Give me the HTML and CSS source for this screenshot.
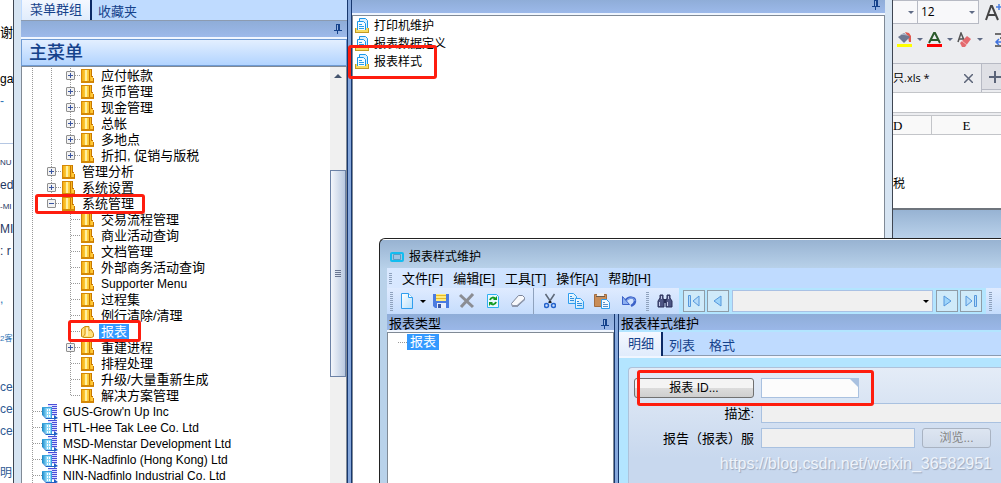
FILE: index.html
```
<!DOCTYPE html>
<html lang="zh-CN">
<head>
    <meta charset="utf-8">
    <title>报表样式维护</title>
    <link rel="stylesheet" href="styles.css">
</head>
<body>
<!-- shared icons -->
<svg class="defs" aria-hidden="true">
    <defs>
        <linearGradient id="gold" x1="0" x2="1" y1="0" y2="0">
            <stop offset="0" stop-color="#f2a408"/>
            <stop offset=".5" stop-color="#ffd84a"/>
            <stop offset="1" stop-color="#f8b010"/>
        </linearGradient>
        <linearGradient id="sky" x1="0" x2="1" y1="0" y2="1">
            <stop offset="0" stop-color="#ffffff"/>
            <stop offset="1" stop-color="#b4dffb"/>
        </linearGradient>
        <linearGradient id="tower" x1="0" x2="1" y1="0" y2="0">
            <stop offset="0" stop-color="#1585c8"/>
            <stop offset="1" stop-color="#7ccdf0"/>
        </linearGradient>
        <symbol id="folder" viewBox="0 0 13 14">
            <rect x="0" y="0" width="11" height="13" fill="url(#gold)"/>
            <path d="M4 1h2v11H4z" fill="#fff0a0"/>
            <path d="M0 0h11v1H0zM0 0h1v13H0zM0 12h13v2H0z" fill="#d48806"/>
            <path d="M8 1h1v11H8zM10 0h1v8h-1zM12 9h1v4h-1zM10 7h2v1h-2z" fill="#c87800"/>
            <path d="M10 8h2v4h-2z" fill="#ffc83a"/>
        </symbol>
        <symbol id="folder-open" viewBox="0 0 13 14">
            <path d="M4 1.500h4v4l2-1 2.500 4v3l-2 1H3l-2.500-1V4z" fill="#ffdf78" stroke="#c98a10"/>
            <path d="M4 2v7l-2 3" fill="none" stroke="#d99a1c"/>
            <path d="M5 3h2v8H5z" fill="#fff0b4"/>
        </symbol>
        <symbol id="company" viewBox="0 0 16 16">
            <path d="M6 0h9v12H6z" fill="#dcdcff"/>
            <path d="M6 0h9v1H6zM10 2h5v1h-5zM10 4h5v1h-5zM10 6h5v1h-5zM10 8h5v1h-5zM10 10h5v1h-5z" fill="#4a4fd8"/>
            <path d="M0 3h4v11l-4-3z" fill="url(#tower)"/>
            <path d="M4 3h6v12H4z" fill="#8dd8f8"/>
            <path d="M0 3h10v1H0zM9 3h1v11H9z" fill="#3aa4de"/>
            <path d="M5 5h1v2H5zM7 5h1v2H7zM5 8h1v2H5zM7 8h1v2H7zM5 11h1v2H5zM7 11h1v2H7z" fill="#fff"/>
            <path d="M0 11l4 3h8v-3l4 3-4 2v-1H4z" fill="#1f5fc4"/>
        </symbol>
        <symbol id="report" viewBox="0 0 14 16">
            <path d="M4.500.5h6l2 2v9h-8z" fill="#d9efff" stroke="#1b97e8"/>
            <path d="M2.500 3.500h6l2 2v8h-8z" fill="#f4fbff" stroke="#1b97e8"/>
            <path d="M4 6h3v1H4zM4 8h5v1H4zM4 10h5v1H4z" fill="#2a9fe8"/>
            <path d="M0 10h2v2h9v-2h3v5H0z" fill="#f7dc62"/>
            <path d="M0 14h14v1H0zM0 10h1v4H0zM13 10h1v4h-1z" fill="#c29a22"/>
        </symbol>
        <symbol id="pin" viewBox="0 0 8 10">
            <path d="M2 0h1v6H2zM2 0h4v1H2zM4 0h2v6H4zM0 6h8v1H0zM3 7h1v3H3z" fill="#15428b"/>
        </symbol>
    </defs>
</svg>

<main class="desktop">
    <section class="mail" aria-label="文档">
        <p class="line greet">谢</p>
        <p class="line intro">ga</p>
        <p class="line dash">-</p>
        <hr>
        <p class="line narrow">NU</p>
        <p class="line">ed</p>
        <p class="line narrow">-MI</p>
        <p class="line">MI</p>
        <p class="line">: r</p>
        <p class="line comma">,</p>
        <p class="line guest">2客</p>
        <p class="line first">ce</p>
        <p class="line">ce</p>
        <p class="line">ce</p>
        <p class="line last">明</p>
    </section>

    <section class="app">
        <div class="side">
            <div class="tabs">
                <button class="tab active">菜单群组</button>
                <button class="tab">收藏夹</button>
            </div>
            <div class="bar"><svg class="pin"><use href="#pin"/></svg></div>
            <h1 class="group">主菜单</h1>
            <div class="tree">
                <ul class="nodes">
                    <li><i class="v"></i><i class="v"></i><i class="v h"><button class="plus" aria-label="展开"></button></i><svg class="folder"><use href="#folder"/></svg><span>应付帐款</span></li>
                    <li><i class="v"></i><i class="v"></i><i class="v h"><button class="plus" aria-label="展开"></button></i><svg class="folder"><use href="#folder"/></svg><span>货币管理</span></li>
                    <li><i class="v"></i><i class="v"></i><i class="v h"><button class="plus" aria-label="展开"></button></i><svg class="folder"><use href="#folder"/></svg><span>现金管理</span></li>
                    <li><i class="v"></i><i class="v"></i><i class="v h"><button class="plus" aria-label="展开"></button></i><svg class="folder"><use href="#folder"/></svg><span>总帐</span></li>
                    <li><i class="v"></i><i class="v"></i><i class="v h"><button class="plus" aria-label="展开"></button></i><svg class="folder"><use href="#folder"/></svg><span>多地点</span></li>
                    <li><i class="v"></i><i class="v"></i><i class="end h"><button class="plus" aria-label="展开"></button></i><svg class="folder"><use href="#folder"/></svg><span>折扣, 促销与版税</span></li>
                    <li><i class="v"></i><i class="v h"><button class="plus" aria-label="展开"></button></i><svg class="folder"><use href="#folder"/></svg><span>管理分析</span></li>
                    <li><i class="v"></i><i class="v h"><button class="plus" aria-label="展开"></button></i><svg class="folder"><use href="#folder"/></svg><span>系统设置</span></li>
                    <li><i class="v"></i><i class="end h"><button class="plus minus" aria-label="折叠"></button></i><svg class="folder"><use href="#folder"/></svg><span>系统管理</span></li>
                    <li><i class="v"></i><i></i><i class="v h"></i><svg class="folder"><use href="#folder"/></svg><span>交易流程管理</span></li>
                    <li><i class="v"></i><i></i><i class="v h"></i><svg class="folder"><use href="#folder"/></svg><span>商业活动查询</span></li>
                    <li><i class="v"></i><i></i><i class="v h"></i><svg class="folder"><use href="#folder"/></svg><span>文档管理</span></li>
                    <li><i class="v"></i><i></i><i class="v h"></i><svg class="folder"><use href="#folder"/></svg><span>外部商务活动查询</span></li>
                    <li><i class="v"></i><i></i><i class="v h"></i><svg class="folder"><use href="#folder"/></svg><span class="latin">Supporter Menu</span></li>
                    <li><i class="v"></i><i></i><i class="v h"></i><svg class="folder"><use href="#folder"/></svg><span>过程集</span></li>
                    <li><i class="v"></i><i></i><i class="v h"></i><svg class="folder"><use href="#folder"/></svg><span>例行清除/清理</span></li>
                    <li><i class="v"></i><i></i><i class="v h"></i><svg class="folder"><use href="#folder-open"/></svg><span class="selected">报表</span></li>
                    <li><i class="v"></i><i></i><i class="v h"><button class="plus" aria-label="展开"></button></i><svg class="folder"><use href="#folder"/></svg><span>重建进程</span></li>
                    <li><i class="v"></i><i></i><i class="v h"></i><svg class="folder"><use href="#folder"/></svg><span>排程处理</span></li>
                    <li><i class="v"></i><i></i><i class="v h"></i><svg class="folder"><use href="#folder"/></svg><span>升级/大量重新生成</span></li>
                    <li><i class="v"></i><i></i><i class="end h"></i><svg class="folder"><use href="#folder"/></svg><span>解决方案管理</span></li>
                    <li><i class="v h"></i><svg class="company"><use href="#company"/></svg><span class="latin">GUS-Grow'n Up Inc</span></li>
                    <li><i class="v h"></i><svg class="company"><use href="#company"/></svg><span class="latin">HTL-Hee Tak Lee Co. Ltd</span></li>
                    <li><i class="v h"></i><svg class="company"><use href="#company"/></svg><span class="latin">MSD-Menstar Development Ltd</span></li>
                    <li><i class="v h"></i><svg class="company"><use href="#company"/></svg><span class="latin">NHK-Nadfinlo (Hong Kong) Ltd</span></li>
                    <li><i class="v h"></i><svg class="company"><use href="#company"/></svg><span class="latin">NIN-Nadfinlo Industrial Co. Ltd</span></li>
                </ul>
                <div class="scroll">
                    <div class="up"></div>
                    <div class="thumb"><span></span></div>
                </div>
            </div>
        </div>
        <div class="splitter"></div>
        <div class="content">
            <div class="bar"><svg class="pin"><use href="#pin"/></svg></div>
            <ul class="reports">
                <li><svg class="report"><use href="#report"/></svg>打印机维护</li>
                <li><svg class="report"><use href="#report"/></svg>报表数据定义</li>
                <li><svg class="report"><use href="#report"/></svg>报表样式</li>
            </ul>
        </div>
    </section>

    <section class="sheet" aria-label="表格">
        <div class="fonts">
            <button class="combo" aria-label="字体"><span class="caret"></span></button>
            <div class="size">
                <select aria-label="字号"><option>12</option></select>
                <span class="caret"></span>
            </div>
            <svg class="grow" viewBox="0 0 16 20"><path d="M1 18L6 4h1l6 14M3 13h8" fill="none" stroke="#444" stroke-width="2"/><path d="M11 5h5M14 2v6" stroke="#4a7de0" stroke-width="1.500"/></svg>
        </div>
        <div class="format">
            <svg width="16" height="16" viewBox="0 0 16 16"><path d="M8 0l4 1 2 3v6h-2l-1-5z" fill="#e0584e"/><path d="M1 5l6-4 6 4-6 6z" fill="#6d7892"/><path d="M3 3l4-2 5 3-5-1z" fill="#aab2c4"/><path d="M0 12h15v3H0z" fill="#ffff00"/></svg>
            <span class="caret"></span>
            <svg width="16" height="16" viewBox="0 0 16 16"><path d="M2 11L7 1h1l5 10M4 8h7" fill="none" stroke="#2b5a2b" stroke-width="2"/><path d="M0 12h15v3H0z" fill="#ff0000"/></svg>
            <span class="caret"></span>
            <svg width="16" height="16" viewBox="0 0 16 16"><path d="M1 10L4 1l3 7M2 7h4" fill="none" stroke="#555" stroke-width="1.500"/><path d="M3 11l7-7 4 3-6 8H5z" fill="#e46a6e"/><path d="M5 9l5 4" stroke="#f5b5b7"/></svg>
            <span class="caret"></span>
            <span class="rule"></span>
            <svg width="10" height="16" viewBox="0 0 10 16"><path d="M1 2h9M1 14h9M6 6h4" stroke="#444" stroke-width="1.500"/><path d="M9 10H2M5 7l-3 3 3 3" fill="none" stroke="#3f72dd" stroke-width="1.500"/></svg>
        </div>
        <div class="files">
            <div class="file"><span>只.xls *</span><button aria-label="关闭"><svg width="9" height="9" viewBox="0 0 9 9"><path d="M0 0l9 9M9 0L0 9" stroke="#5b6478" stroke-width="1.500"/></svg></button></div>
            <button class="add" aria-label="新建"><svg width="12" height="12" viewBox="0 0 12 12"><path d="M6 0v12M0 6h12" stroke="#5b6478" stroke-width="2"/></svg></button>
        </div>
        <div class="formula"></div>
        <div class="columns"><span class="col">D</span><span class="col">E</span></div>
        <div class="cells"><span>税</span></div>
        <div class="behind"></div>
    </section>

    <section class="dialog">
        <header class="title">
            <svg width="14" height="10" viewBox="0 0 14 10"><rect x="1" y="1" width="12" height="8" rx="1" fill="#9cc4e2" stroke="#12bdf0" stroke-width="2"/><path d="M3.500 2.500h7v5h-7z" fill="none" stroke="#5b9cc4"/></svg>
            <h2>报表样式维护</h2>
        </header>
        <nav class="menu">
            <span class="grip"></span>
            <button>文件[F]</button>
            <button>编辑[E]</button>
            <button>工具[T]</button>
            <button>操作[A]</button>
            <button>帮助[H]</button>
        </nav>
        <div class="toolbar">
            <div class="strip main">
                <span class="grip"></span>
                <button class="new" aria-label="新建"><svg width="14" height="16" viewBox="0 0 14 16"><path d="M1.500.5h7l4 4v11h-11z" fill="url(#sky)" stroke="#2f9eee"/><path d="M8.500.5v4h4" fill="#fff" stroke="#2f9eee"/></svg></button>
                <button class="drop" aria-label="更多"><span class="caret dark"></span></button>
                <button class="save" aria-label="保存"><svg width="16" height="16" viewBox="0 0 16 16"><path d="M0 1h16v14H2l-2-2z" fill="#4b7be0"/><path d="M3 1h10v7H3z" fill="#ffeb7e"/><path d="M3 2h10v1H3zM3 5h10v1H3z" fill="#e6b82c"/><path d="M4 10h9v5H4z" fill="#e8eefc"/><path d="M5 11h3v4H5z" fill="#3a56a4"/></svg></button>
                <button class="del" aria-label="删除"><svg width="16" height="16" viewBox="0 0 16 16"><path d="M1 2l13 12M14 1L2 14" stroke="#8b8d93" stroke-width="3"/></svg></button>
                <button class="reload" aria-label="刷新"><svg width="14" height="16" viewBox="0 0 14 16"><path d="M1.500 1.500h9l2 2v11h-11z" fill="#eaf8ff" stroke="#2fb0f0"/><path d="M4 7c1-3 4-3 5-1M10 9c-1 3-4 3-5 1" fill="none" stroke="#149a22" stroke-width="2"/><path d="M11 3v4H7zM3 13V9h4z" fill="#149a22"/></svg></button>
                <button class="erase" aria-label="清除"><svg width="16" height="16" viewBox="0 0 16 16"><path d="M1.500 10.500l7-8h4l2 2v2l-7 7h-5z" fill="#f7f8fb" stroke="#7c8498"/><path d="M2 12l1 2h4l8-7V5l-8 7z" fill="#8f98ac"/></svg></button>
                <span class="rule"></span>
                <button class="cut" aria-label="剪切"><svg width="12" height="16" viewBox="0 0 12 16"><path d="M1.500 1l6 9M10.500 1l-6 9" stroke="#5e6878" stroke-width="1.500"/><path d="M5 8h2v2H5z" fill="#222"/><circle cx="2.500" cy="12.500" r="2" fill="none" stroke="#2563cc" stroke-width="1.500"/><circle cx="9.500" cy="12.500" r="2" fill="none" stroke="#2563cc" stroke-width="1.500"/></svg></button>
                <button class="copy" aria-label="复制"><svg width="16" height="16" viewBox="0 0 16 16"><path d="M.5.5h5l3 3v7h-8z" fill="url(#sky)" stroke="#2f9eee"/><path d="M7.500 5.500h5l3 3v7h-8z" fill="url(#sky)" stroke="#2f9eee"/><path d="M2 3h2v1H2zM2 5h4v1H2zM2 7h4v1H2zM9 8h2v1H9zM9 10h5v1H9zM9 12h5v1H9z" fill="#2f8ede"/></svg></button>
                <button class="paste" aria-label="粘贴"><svg width="16" height="16" viewBox="0 0 16 16"><path d="M.5 1.500h12v12H.5z" fill="#c98d58" stroke="#a26c40"/><path d="M3 0h7v3H3z" fill="#eceef2"/><path d="M2 3h9v1H2z" fill="#6b5a4c"/><path d="M7.500 6.500h5l3 3v6h-8z" fill="#f2faff" stroke="#2f9eee"/><path d="M9 9h2v1H9zM9 11h5v1H9zM9 13h5v1H9z" fill="#5b8fc8"/></svg></button>
                <button class="undo" aria-label="撤消"><svg width="16" height="16" viewBox="0 0 16 16"><path d="M4 8c4-5 10-4 10 0 0 3-2 4-4 5" fill="none" stroke="#3c62c8" stroke-width="2.500"/><path d="M5 8c3-4 8-4 9 0" fill="none" stroke="#8db0f0"/><path d="M1.500 3.500v8h7z" fill="#8db0f0" stroke="#3c62c8"/></svg></button>
            </div>
            <div class="strip find">
                <span class="grip"></span>
                <button aria-label="查找"><svg width="16" height="16" viewBox="0 0 16 16"><path d="M3 2h3v3l1 3v6H1V8l2-3zM10 2h3v3l2 3v6H9V8l1-3z" fill="#4d5583" stroke="#2a3058"/><path d="M7 6h2v4H7z" fill="#2a3058"/><path d="M2 9h1v4H2zM10 9h1v4h-1zM4 3h1v3H4zM11 3h1v3h-1z" fill="#c4cae8"/></svg></button>
            </div>
            <div class="pager">
                <button aria-label="首个"><svg width="12" height="12" viewBox="0 0 12 12"><path d="M.5.5h2v11h-2zM11 1v10L5 6z" fill="#b5dcfa" stroke="#5698dc"/></svg></button>
                <button aria-label="上一个"><svg width="12" height="12" viewBox="0 0 12 12"><path d="M9 1v10L2 6z" fill="#9dd5fa" stroke="#5698dc"/></svg></button>
                <div class="record">
                    <select aria-label="记录"><option></option></select>
                    <span class="caret dark"></span>
                </div>
                <button aria-label="下一个"><svg width="12" height="12" viewBox="0 0 12 12"><path d="M3 1v10l7-5z" fill="#9dd5fa" stroke="#5698dc"/></svg></button>
                <button aria-label="末个"><svg width="12" height="12" viewBox="0 0 12 12"><path d="M1 1v10l6-5zM9.500.5h2v11h-2z" fill="#b5dcfa" stroke="#5698dc"/></svg></button>
            </div>
            <div class="strip tail"><span class="grip"></span></div>
        </div>
        <div class="work">
            <div class="types">
                <h3 class="caption">报表类型<svg class="pin"><use href="#pin"/></svg></h3>
                <ul class="typelist"><li><span class="selected">报表</span></li></ul>
            </div>
            <div class="splitter"></div>
            <div class="detail">
                <h3 class="caption">报表样式维护</h3>
                <div class="tabs">
                    <button class="tab active">明细</button>
                    <button class="tab">列表</button>
                    <button class="tab">格式</button>
                </div>
                <form class="form">
                    <button type="button" class="idbtn" id="idbtn">报表 ID...</button>
                    <div class="lookup"><input type="text" aria-labelledby="idbtn"></div>
                    <label for="desc">描述:</label>
                    <input type="text" id="desc" class="off wide" disabled>
                    <label for="serv">报告（报表）服</label>
                    <div class="pair">
                        <input type="text" id="serv" class="off" disabled>
                        <button type="button" class="browse" disabled>浏览...</button>
                    </div>
                </form>
            </div>
        </div>
    </section>

    <div class="mark mark-report"></div>
    <div class="mark mark-system"></div>
    <div class="mark mark-node"></div>
    <div class="mark mark-id"></div>
    <div class="watermark">https://blog.csdn.net/weixin_36582951</div>
</main>
</body>
</html>
```
FILE: styles.css
```
* {
    box-sizing: border-box;
}

body {
    margin: 0;
    font-family: "Liberation Sans", "Noto Sans CJK SC", sans-serif;
    font-size: 13px;
    line-height: 16px;
    color: #000;
}

h1, h2, h3, p, ul {
    margin: 0;
    padding: 0;
    font-weight: normal;
    font-size: inherit;
    list-style: none;
}

button, input, select {
    margin: 0;
    padding: 0;
    border: 0;
    border-radius: 0;
    background: none;
    font: inherit;
    color: inherit;
    appearance: none;
}

svg {
    display: block;
    flex: none;
}

.defs {
    position: absolute;
    width: 0;
    height: 0;
}

.desktop {
    position: relative;
    display: grid;
    grid-template-columns: 13px 1fr 108px;
    height: 100vh;
    overflow: hidden;
}

/* mail behind the window */
.mail {
    overflow: hidden;
    background: #fff;
    color: #1f3864;
    font-size: 12px;
    line-height: 22px;
}

.mail hr {
    margin: 31px 0 8px;
    border: 0;
    border-top: 1px solid #b5c7e3;
}

.line {
    white-space: nowrap;
}

.greet {
    margin-top: 22px;
    font-size: 13px;
    color: #000;
}

.intro {
    margin-top: 24px;
    color: #000;
}

.dash {
    color: #2e74b5;
}

.narrow {
    font-size: 8px;
}

.comma {
    margin-top: 26px;
    color: #2e74b5;
}

.guest {
    margin-top: 18px;
    font-size: 8px;
    color: #2e74b5;
}

.first {
    margin-top: 26px;
}

.first, .first ~ .line {
    color: #2e5a94;
}

.last {
    margin-top: 20px;
}

/* main window */
.app {
    display: flex;
    min-width: 0;
    border: solid #3f4652;
    border-width: 0 1px;
    background: #d6e4f2;
    padding: 0 7px;
    overflow: hidden;
}

.side {
    display: flex;
    flex-direction: column;
    flex: none;
    width: 326px;
    background: #f0f6ff;
}

.tabs {
    display: flex;
    background: #bfdbff;
    color: #15428b;
}

.tab {
    padding: 3px 6px 0;
    color: #15428b;
}

.tab.active {
    padding: 0 8px 1px;
    border-right: 2px solid #0b2a66;
    background: linear-gradient(#f4f8ff, #e0ecfc);
}

.side .tabs {
    height: 21px;
    padding-left: 1px;
    border-bottom: 1px solid #8c9bb0;
}

.bar {
    display: flex;
    align-items: center;
    justify-content: flex-end;
    flex: none;
    height: 16px;
    padding-right: 5px;
    background: linear-gradient(#8fadd8, #9cb9ea);
}

.pin {
    width: 8px;
    height: 10px;
}

.group {
    margin-top: 2px;
    padding: 3px 7px 2px;
    border: 1px solid #6f9bd4;
    background: linear-gradient(#e3efff, #b2d4ff);
    color: #15428b;
    font-size: 18px;
    line-height: 20px;
    font-weight: 500;
}

.tree {
    display: flex;
    flex: 1;
    border: solid #808a96;
    border-width: 1px 1px 0;
    background: #fff;
    overflow: hidden;
}

.nodes {
    flex: 1;
    padding: 1px 0 0 1px;
}

.nodes li {
    display: flex;
    align-items: center;
    height: 16px;
    white-space: nowrap;
}

/* one column of guide lines */
.nodes i {
    position: relative;
    display: flex;
    justify-content: center;
    flex: none;
    width: 19px;
    height: 16px;
    padding-top: 3px;
    background-repeat: no-repeat;
}

.v {
    background-image: repeating-linear-gradient(#999 0 1px, transparent 1px 2px);
    background-size: 1px 16px;
    background-position: 9px 0;
}

.end {
    background-image: repeating-linear-gradient(#999 0 1px, transparent 1px 2px);
    background-size: 1px 8px;
    background-position: 9px 0;
}

.h::after {
    content: "";
    position: absolute;
    left: 10px;
    right: 0;
    top: 7px;
    height: 1px;
    background: repeating-linear-gradient(90deg, #999 0 1px, transparent 1px 2px);
}

.plus {
    z-index: 1;
    width: 9px;
    height: 9px;
    border: 1px solid #8f8f8f;
    border-radius: 1px;
    background:
        linear-gradient(#3a55a0, #3a55a0) center / 5px 1px no-repeat,
        linear-gradient(#3a55a0, #3a55a0) center / 1px 5px no-repeat,
        #f2f2f2;
}

.minus {
    background: linear-gradient(#3a55a0, #3a55a0) center / 5px 1px no-repeat, #f2f2f2;
}

.folder {
    width: 13px;
    height: 14px;
    margin: 0 5px 0 1px;
}

.company {
    width: 16px;
    height: 16px;
    margin-right: 3px;
}

.nodes span {
    padding: 0 2px;
}

.latin {
    font-size: 12px;
}

.selected {
    background: #3399ff;
    color: #fff;
}

.scroll {
    display: flex;
    flex-direction: column;
    width: 16px;
    background: #f0f0f0;
}

.up {
    margin: 7px auto 92px;
    border: 4px solid transparent;
    border-top: 0;
    border-bottom-color: #44546e;
}

.thumb {
    display: flex;
    align-items: center;
    justify-content: center;
    height: 207px;
    border: 1px solid #6c82a6;
    background: linear-gradient(90deg, #f3f6fb, #b9c9e0);
}

.thumb span {
    width: 6px;
    height: 7px;
    background: repeating-linear-gradient(#6a7690 0 1px, transparent 1px 2px);
}

.splitter {
    flex: none;
    width: 5px;
    border: solid #17376e;
    border-width: 0 1px;
    background: #86a8dc;
}

.content {
    display: flex;
    flex-direction: column;
    flex: 1;
    background: #f0f6ff;
}

.content .bar {
    height: 13px;
    align-items: flex-start;
}

.reports {
    flex: 1;
    margin-top: 2px;
    padding-top: 1px;
    border: solid #808a96;
    border-width: 1px 1px 0;
    background: #fff;
    font-size: 12px;
}

.reports li {
    display: flex;
    align-items: center;
    gap: 5px;
    height: 18px;
    padding-left: 2px;
}

.report {
    width: 14px;
    height: 16px;
}

/* spreadsheet */
.sheet {
    background: #ecedf0;
    overflow: hidden;
}

.caret {
    flex: none;
    border: 3px solid transparent;
    border-top-color: #5f6b85;
    border-bottom: 0;
}

.caret.dark {
    border-top-color: #000;
}

.fonts {
    display: flex;
    align-items: center;
    height: 24px;
}

.combo {
    display: flex;
    align-items: center;
    justify-content: flex-end;
    width: 25px;
    height: 24px;
    padding-right: 3px;
    border: 1px solid #b7bac4;
    border-left: 0;
    background: #f8f8fa;
}

/* drop-down with its own arrow */
.size, .record {
    display: flex;
    align-items: center;
    border: 1px solid #b7bac4;
    background: #f8f8fa;
}

.size select, .record select {
    flex: 1;
    align-self: stretch;
    min-width: 0;
}

.size {
    width: 61px;
    height: 24px;
    padding: 0 3px;
    border-left: 0;
    font-family: "Open Sans", sans-serif;
    font-size: 12px;
}

.grow {
    width: 16px;
    height: 20px;
    margin-left: 6px;
}

.format {
    display: flex;
    align-items: center;
    gap: 4px;
    height: 40px;
    padding: 0 0 8px 4px;
    border-bottom: 1px solid #b7bac4;
}

.format .rule {
    width: 1px;
    height: 20px;
    margin: 0 2px 0 1px;
    background: #c3c5cc;
}

.files {
    display: flex;
    height: 28px;
}

.file {
    display: flex;
    align-items: center;
    justify-content: space-between;
    width: 89px;
    padding-right: 8px;
    border-right: 1px solid #b7bac4;
    font-family: "Open Sans", "Noto Sans CJK SC", sans-serif;
    font-size: 11px;
    white-space: nowrap;
}

.add {
    flex: 1;
    padding-left: 7px;
    height: 26px;
    border-bottom: 1px solid #b7bac4;
    background: #dfe0e5;
}

.formula {
    height: 21px;
    border: solid #c3c5c9;
    border-width: 1px 0;
    background: #fff;
}

.columns {
    display: flex;
    height: 20px;
    margin-top: 2px;
    border: solid #c3c5c9;
    border-width: 1px 0;
    background: #f9f9f9;
    font: 13px/20px "Liberation Serif", serif;
}

.col {
    flex: 1;
    text-align: center;
}

.col:first-child {
    flex: none;
    width: 39px;
    padding-right: 32px;
    border-right: 1px solid #c3c5c9;
}

.cells {
    height: 75px;
    padding-top: 41px;
    border-bottom: 2px solid #6e747c;
    background: #fff;
    font-size: 12px;
}

.behind {
    height: 28px;
    background: linear-gradient(#97b3d3, #b9d1ea);
}

/* report style dialog */
.dialog {
    position: absolute;
    left: 379px;
    top: 238px;
    right: 0;
    bottom: 0;
    display: flex;
    flex-direction: column;
    padding: 1px 0 0 7px;
    border: solid #222;
    border-width: 1px 0 0 1px;
    border-radius: 6px 0 0 0;
    background: linear-gradient(#fff 0 1px, #98b3d2 1px, #b9d2ea 30px);
    overflow: hidden;
}

.title {
    display: flex;
    align-items: center;
    gap: 5px;
    height: 28px;
    padding: 6px 0 0 3px;
    font-size: 12px;
}

.menu {
    display: flex;
    align-items: center;
    height: 20px;
    gap: 10px;
    padding: 2px 0 0 2px;
    background: linear-gradient(90deg, #d9e8ff, #bfdbff 270px);
}

.grip {
    flex: none;
    width: 3px;
    height: 19px;
    background: repeating-linear-gradient(#8fa2bd 0 1px, transparent 1px 2px);
}

.menu .grip {
    height: 12px;
}

.toolbar {
    display: flex;
    height: 26px;
    background: #b3e5ff;
}

.strip {
    display: flex;
    align-items: center;
    flex: none;
    padding-left: 3px;
    background: linear-gradient(#dfebff, #c5dcfc);
}

.strip.main {
    width: 256px;
}

.new {
    margin-left: 7px;
}

.drop {
    display: flex;
    margin: 0 7px 0 6px;
}

.save, .reload, .copy {
    margin-right: 10px;
}

.del, .paste {
    margin-right: 11px;
}

.erase {
    margin-right: 7px;
}

.strip .rule {
    width: 1px;
    height: 26px;
    margin-right: 10px;
    background: #8fa2bd;
}

.cut {
    margin-right: 12px;
}

.find {
    gap: 8px;
    width: 36px;
}

.pager {
    display: flex;
    align-items: center;
    flex: 1;
    gap: 2px;
    padding: 0 4px;
}

.pager button {
    display: flex;
    align-items: center;
    justify-content: center;
    flex: none;
    width: 22px;
    height: 22px;
    border: 1px solid #8f9da8;
    background: #cfeaf9;
}

.record {
    flex: 1;
    height: 22px;
    margin: 0 1px;
    padding-right: 3px;
    border-color: #a9c1e4;
    background: #f0f0f0;
}

.tail {
    width: 15px;
}

.work {
    display: flex;
    flex: 1;
}

.types {
    display: flex;
    flex-direction: column;
    flex: none;
    width: 227px;
    background: #f0f6ff;
}

.caption {
    display: flex;
    align-items: center;
    justify-content: space-between;
    flex: none;
    height: 16px;
    padding: 3px 5px 0 2px;
    background: linear-gradient(#8fadd8, #9ab7e8);
}

.typelist {
    flex: 1;
    margin-top: 2px;
    padding: 1px 0 0 10px;
    border: solid #808a96;
    border-width: 1px 1px 0;
    background: #fff;
}

.typelist li {
    display: flex;
    align-items: center;
}

.typelist li::before {
    content: "";
    width: 9px;
    height: 1px;
    background: repeating-linear-gradient(90deg, #999 0 1px, transparent 1px 2px);
}

.typelist .selected {
    padding: 0 3px;
}

.detail {
    display: flex;
    flex-direction: column;
    flex: 1;
    background: #b3e5ff;
}

.detail .tabs {
    height: 26px;
    margin-top: 2px;
    gap: 2px;
    border-bottom: 2px solid #f0f6ff;
    box-shadow: inset 0 -1px #8c9bb0;
}

.detail .tab {
    padding: 4px 6px 0;
}

.detail .tab.active {
    padding: 0 7px 0 9px;
    margin-right: -2px;
}

.form {
    display: grid;
    grid-template-columns: 120px 1fr;
    grid-auto-rows: 20px;
    gap: 5px 7px;
    flex: 1;
    margin: 9px 0 0 9px;
    padding: 10px 0 0 5px;
    border: solid #aec2da;
    border-width: 1px 0 0 1px;
    border-radius: 4px 0 0 0;
    background: linear-gradient(#e4ecf7, #c8d8ee 90px);
}

.form label {
    text-align: right;
    line-height: 22px;
}

.form input {
    height: 20px;
    border: 1px solid #a9c1e0;
    background: #fcfcfc;
}

.form .off {
    background: #f0f0f0;
}

.form .wide {
    width: 100%;
    border-right: 0;
}

.idbtn, .browse {
    border: 1px solid #707070;
    border-radius: 3px;
    background: linear-gradient(#f4f4f4 0 50%, #dcdcdc 50%, #cfcfcf);
    font-size: 12px;
}

.lookup {
    position: relative;
    width: 98px;
}

.lookup input {
    display: block;
    width: 100%;
}

/* corner flag */
.lookup::after {
    content: "";
    position: absolute;
    top: 1px;
    right: 1px;
    border-left: 8px solid transparent;
    border-top: 8px solid #a9c1e0;
}

.pair {
    display: flex;
    gap: 7px;
}

.pair input {
    width: 154px;
}

.browse {
    width: 69px;
    border-color: #a9b3c2;
    background: linear-gradient(#dde5f1, #d0dbea);
    color: #838383;
}

/* red frames drawn over the windows */
.mark {
    position: absolute;
    border: 3px solid #fe1d0e;
    border-radius: 3px;
}

.mark-report {
    left: 348px;
    top: 45px;
    width: 89px;
    height: 34px;
}

.mark-system {
    left: 35px;
    top: 194px;
    width: 110px;
    height: 20px;
}

.mark-node {
    left: 68px;
    top: 320px;
    width: 73px;
    height: 22px;
}

.mark-id {
    left: 637px;
    top: 370px;
    width: 237px;
    height: 36px;
}

.watermark {
    position: absolute;
    right: 9px;
    bottom: 9px;
    color: #eef3fa;
    font-size: 16px;
    line-height: 20px;
    text-shadow: 1px 1px 1px #9aa8bd;
}
```
